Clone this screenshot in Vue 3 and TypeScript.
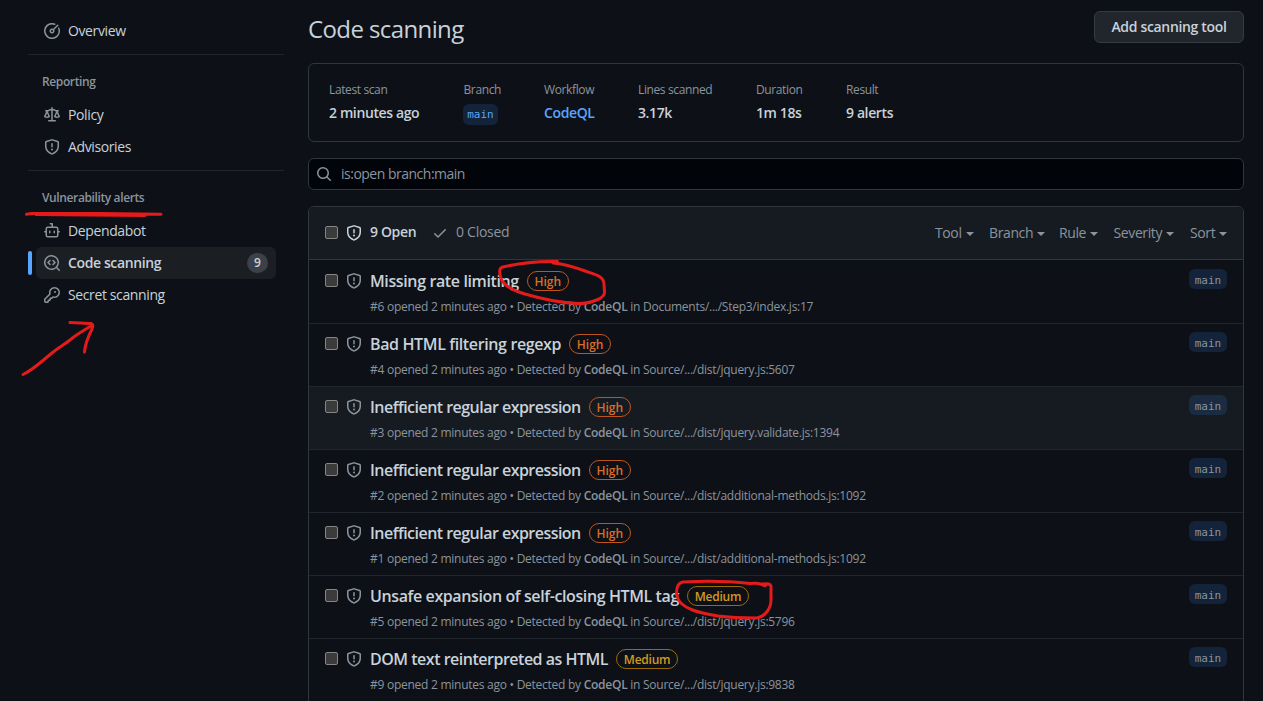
<script setup lang="ts">
interface NavItem {
  label: string
  icon: string
  count?: number
}
interface NavGroup {
  heading?: string
  items: NavItem[]
}
interface Alert {
  id: number
  title: string
  tracking: number
  severity: 'High' | 'Medium'
  location: string
  hovered?: boolean
}

const icons: Record<string, string> = {
  meter:
    'M8 1.5a6.5 6.5 0 1 0 6.016 4.035.75.75 0 0 1 1.388-.57 8 8 0 1 1-4.37-4.37.75.75 0 1 1-.569 1.389A6.479 6.479 0 0 0 8 1.5Zm6.28.22a.75.75 0 0 1 0 1.06l-4.063 4.064a2.5 2.5 0 1 1-1.06-1.06L13.22 1.72a.75.75 0 0 1 1.06 0ZM7 8a1 1 0 1 0 2 0 1 1 0 0 0-2 0Z',
  law: 'M8.75.75V2h.985c.304 0 .603.08.867.231l1.29.736c.038.022.08.033.124.033h2.234a.75.75 0 0 1 0 1.5h-.427l2.111 4.692a.75.75 0 0 1-.154.838l-.53-.53.529.531-.001.002-.002.002-.006.006-.006.005-.01.01-.045.04c-.21.176-.441.327-.686.45C14.556 10.78 13.88 11 13 11a4.498 4.498 0 0 1-2.023-.454 3.544 3.544 0 0 1-.686-.45l-.045-.04-.016-.015-.006-.006-.004-.004v-.001a.75.75 0 0 1-.154-.838L12.178 4.5h-.162c-.305 0-.604-.079-.868-.231l-1.29-.736a.245.245 0 0 0-.124-.033H8.75V13h2.5a.75.75 0 0 1 0 1.5h-6.5a.75.75 0 0 1 0-1.5h2.5V3.5h-.984a.245.245 0 0 0-.124.033l-1.289.737c-.265.15-.564.23-.869.23h-.162l2.112 4.692a.75.75 0 0 1-.154.838l-.53-.53.529.531-.001.002-.002.002-.006.006-.016.015-.045.04c-.21.176-.441.327-.686.45C4.556 10.78 3.88 11 3 11a4.498 4.498 0 0 1-2.023-.454 3.544 3.544 0 0 1-.686-.45l-.045-.04-.016-.015-.006-.006-.004-.004v-.001a.75.75 0 0 1-.154-.838L2.178 4.5H1.75a.75.75 0 0 1 0-1.5h2.234a.249.249 0 0 0 .125-.033l1.288-.737c.265-.15.564-.23.869-.23h.984V.75a.75.75 0 0 1 1.5 0Zm2.945 8.477c.285.135.718.273 1.305.273s1.02-.138 1.305-.273L13 6.327Zm-10 0c.285.135.718.273 1.305.273s1.02-.138 1.305-.273L3 6.327Z',
  shield:
    'M7.467.133a1.748 1.748 0 0 1 1.066 0l5.25 1.68A1.75 1.75 0 0 1 15 3.48V7c0 1.566-.32 3.182-1.303 4.682-.983 1.498-2.585 2.813-5.032 3.855a1.697 1.697 0 0 1-1.33 0c-2.447-1.042-4.049-2.357-5.032-3.855C1.32 10.182 1 8.566 1 7V3.48a1.75 1.75 0 0 1 1.217-1.667Zm.61 1.429a.25.25 0 0 0-.153 0l-5.25 1.68a.25.25 0 0 0-.174.238V7c0 1.358.275 2.666 1.057 3.86.784 1.194 2.121 2.34 4.366 3.297a.196.196 0 0 0 .154 0c2.245-.956 3.582-2.104 4.366-3.298C13.225 9.666 13.5 8.36 13.5 7V3.48a.251.251 0 0 0-.174-.237l-5.25-1.68ZM8.75 4.75v3a.75.75 0 0 1-1.5 0v-3a.75.75 0 0 1 1.5 0ZM9 10.5a1 1 0 1 1-2 0 1 1 0 0 1 2 0Z',
  dependabot:
    'M5.75 7.5a.75.75 0 0 1 .75.75v1.5a.75.75 0 0 1-1.5 0v-1.5a.75.75 0 0 1 .75-.75Zm5.25.75a.75.75 0 0 0-1.5 0v1.5a.75.75 0 0 0 1.5 0v-1.5ZM6.25 0h2A.75.75 0 0 1 9 .75V3.5h3.25a2.25 2.25 0 0 1 2.25 2.25V8h.75a.75.75 0 0 1 0 1.5h-.75v2.75a2.25 2.25 0 0 1-2.25 2.25h-8.5a2.25 2.25 0 0 1-2.25-2.25V9.5H.75a.75.75 0 0 1 0-1.5h.75V5.75A2.25 2.25 0 0 1 3.75 3.5H7.5v-2H6.25a.75.75 0 0 1 0-1.5ZM3 5.75v6.5c0 .414.336.75.75.75h8.5a.75.75 0 0 0 .75-.75v-6.5a.75.75 0 0 0-.75-.75h-8.5a.75.75 0 0 0-.75.75Z',
  codescan:
    'M8.47 4.97a.75.75 0 0 0 0 1.06L9.94 7.5 8.47 8.97a.75.75 0 1 0 1.06 1.06l2-2a.75.75 0 0 0 0-1.06l-2-2a.75.75 0 0 0-1.06 0ZM6.53 6.03a.75.75 0 0 0-1.06-1.06l-2 2a.75.75 0 0 0 0 1.06l2 2a.75.75 0 1 0 1.06-1.06L5.06 7.5l1.47-1.47ZM12.246 13.307a7.5 7.5 0 1 1 1.06-1.06l2.474 2.473a.749.749 0 1 1-1.06 1.06l-2.474-2.473ZM1.5 7.5a6.002 6.002 0 0 0 3.608 5.504 6.002 6.002 0 0 0 6.486-1.117.748.748 0 0 1 .292-.293A6 6 0 1 0 1.5 7.5Z',
  key: 'M10.5 0a5.499 5.499 0 1 1-1.288 10.848l-.932.932a.749.749 0 0 1-.53.22H7v.75a.749.749 0 0 1-.22.53l-.5.5a.749.749 0 0 1-.53.22H5v.75a.749.749 0 0 1-.22.53l-.5.5a.749.749 0 0 1-.53.22h-2A1.75 1.75 0 0 1 0 14.25v-2c0-.199.079-.389.22-.53l4.932-4.932A5.5 5.5 0 0 1 10.5 0Zm-4 5.5c-.001.431.069.86.205 1.269a.75.75 0 0 1-.181.768L1.5 12.56v1.69c0 .138.112.25.25.25h1.69l.06-.06v-1.19a.75.75 0 0 1 .75-.75h1.19l.06-.06v-1.19a.75.75 0 0 1 .75-.75h1.19l1.023-1.025a.75.75 0 0 1 .768-.18A4 4 0 1 0 6.5 5.5ZM11 6a1 1 0 1 1 0-2 1 1 0 0 1 0 2Z',
  check:
    'M13.78 4.22a.75.75 0 0 1 0 1.06l-7.25 7.25a.75.75 0 0 1-1.06 0L2.22 9.28a.751.751 0 0 1 .018-1.042.751.751 0 0 1 1.042-.018L6 10.94l6.72-6.72a.75.75 0 0 1 1.06 0Z',
  search:
    'M10.68 11.74a6 6 0 0 1-7.922-8.982 6 6 0 0 1 8.982 7.922l3.04 3.04a.749.749 0 0 1-.326 1.275.749.749 0 0 1-.734-.215ZM11.5 7a4.499 4.499 0 1 0-8.997 0A4.499 4.499 0 0 0 11.5 7Z',
}

const groups: NavGroup[] = [
  { items: [{ label: 'Overview', icon: 'meter' }] },
  {
    heading: 'Reporting',
    items: [
      { label: 'Policy', icon: 'law' },
      { label: 'Advisories', icon: 'shield' },
    ],
  },
  {
    heading: 'Vulnerability alerts',
    items: [
      { label: 'Dependabot', icon: 'dependabot' },
      { label: 'Code scanning', icon: 'codescan', count: 9 },
      { label: 'Secret scanning', icon: 'key' },
    ],
  },
]

const summary = [
  { label: 'Latest scan', value: '2 minutes ago', kind: 'text' },
  { label: 'Branch', value: 'main', kind: 'branch' },
  { label: 'Workflow', value: 'CodeQL', kind: 'link' },
  { label: 'Lines scanned', value: '3.17k', kind: 'text' },
  { label: 'Duration', value: '1m 18s', kind: 'text' },
  { label: 'Result', value: '9 alerts', kind: 'text' },
]

const filters = ['Tool', 'Branch', 'Rule', 'Severity', 'Sort']

const alerts: Alert[] = [
  { id: 6, title: 'Missing rate limiting', tracking: -0.38, severity: 'High', location: 'Documents/.../Step3/index.js:17' },
  { id: 4, title: 'Bad HTML filtering regexp', tracking: -0.37, severity: 'High', location: 'Source/.../dist/jquery.js:5607' },
  { id: 3, title: 'Inefficient regular expression', tracking: -0.53, severity: 'High', location: 'Source/.../dist/jquery.validate.js:1394', hovered: true },
  { id: 2, title: 'Inefficient regular expression', tracking: -0.53, severity: 'High', location: 'Source/.../dist/additional-methods.js:1092' },
  { id: 1, title: 'Inefficient regular expression', tracking: -0.53, severity: 'High', location: 'Source/.../dist/additional-methods.js:1092' },
  { id: 5, title: 'Unsafe expansion of self-closing HTML tag', tracking: -0.39, severity: 'Medium', location: 'Source/.../dist/jquery.js:5796' },
  { id: 9, title: 'DOM text reinterpreted as HTML', tracking: -0.49, severity: 'Medium', location: 'Source/.../dist/jquery.js:9838' },
]
</script>

<template>
  <div class="page">
    <nav class="sidebar">
      <section v-for="(group, gi) in groups" :key="gi" class="group">
        <h3 v-if="group.heading" class="group-heading">{{ group.heading }}</h3>
        <a v-for="item in group.items" :key="item.label" class="nav-item" :class="{ current: item.count }">
          <svg class="icon" viewBox="0 0 16 16"><path :d="icons[item.icon]" /></svg>
          <span class="nav-label">{{ item.label }}</span>
          <span v-if="item.count" class="counter">{{ item.count }}</span>
        </a>
      </section>
    </nav>

    <main class="content">
      <header class="page-head">
        <h1 class="page-title">Code scanning</h1>
        <button class="tool-button">Add scanning tool</button>
      </header>

      <dl class="summary">
        <div v-for="cell in summary" :key="cell.label" class="summary-cell">
          <dt>{{ cell.label }}</dt>
          <dd :class="cell.kind">
            <span v-if="cell.kind === 'branch'" class="branch-tag link-tag">{{ cell.value }}</span>
            <template v-else>{{ cell.value }}</template>
          </dd>
        </div>
      </dl>

      <div class="search">
        <svg class="icon" viewBox="0 0 16 16"><path :d="icons.search" /></svg>
        <span>is:open branch:main</span>
      </div>

      <section class="list">
        <div class="list-head">
          <span class="checkbox"></span>
          <svg class="icon bright" viewBox="0 0 16 16"><path :d="icons.shield" /></svg>
          <span class="open-count">9 Open</span>
          <svg class="icon check" viewBox="0 0 16 16"><path :d="icons.check" /></svg>
          <span class="closed-count">0 Closed</span>
          <div class="filters">
            <span v-for="name in filters" :key="name" class="filter">{{ name }}<i class="caret"></i></span>
          </div>
        </div>

        <article v-for="alert in alerts" :key="alert.id" class="row" :class="{ hovered: alert.hovered }">
          <span class="checkbox"></span>
          <svg class="icon" viewBox="0 0 16 16"><path :d="icons.shield" /></svg>
          <div class="row-body">
            <div class="row-title">
              <span class="title-text" :style="{ letterSpacing: `${alert.tracking}px` }">{{ alert.title }}</span>
              <span class="severity" :class="alert.severity.toLowerCase()">{{ alert.severity }}</span>
            </div>
            <div class="row-meta">
              #{{ alert.id }} opened 2 minutes ago • Detected by <b>CodeQL</b> in {{ alert.location }}
            </div>
          </div>
          <span class="branch-tag">main</span>
        </article>
      </section>
    </main>

    <!-- Hand-drawn markup over the page -->
    <svg class="markup" viewBox="0 0 1263 701">
      <path d="M26.500 214.300 L32 213.500 L100 213.500 L161 214.300 M36 214.500 L90 215 L145 215.500" />
      <path d="M23 374.500 C33 370 42 361 52 353 C59 347 64 345 70 340 C77 334 84 330 92 325.500" />
      <path d="M70 322.500 C78 323 85 323 91 323.500 Q94 324.500 92 329 C88 337 85 344 84.500 352" />
      <path d="M557.500 261.500 C541 261 520 263 503 267 C499 268 499.500 271 500 275 C501 284 511 290 525 294 C542 299 560 303 578 303.500 C592 303.500 605 298 604.500 292 L604 284 C604 277 597 275 588 272 C577 268 564 263.500 553 263" />
      <path d="M765 586 C760 583 757 583 750 583.500 C728 581 702 581 683 582 C677 583 676 590 677 596 C680 609 700 613 718 616 C733 618 745 618 757 618 C766 616 771 608 771 600 L771 586 C770 583 766 584 761 584" />
    </svg>
  </div>
</template>

<style>
html,
body {
  margin: 0;
  background: #0d1117;
}
</style>

<style scoped>
.page {
  position: relative;
  display: flex;
  width: 1263px;
  height: 701px;
  overflow: hidden;
  box-sizing: border-box;
  background: #0d1117;
  color: #c9d1d9;
  font-family: 'Open Sans', 'Noto Sans', sans-serif;
  font-size: 14px;
  line-height: 20px;
  font-stretch: 94%;
  letter-spacing: -0.38px;
  white-space: nowrap;
}
.page *,
.page *::before {
  box-sizing: border-box;
}
h1,
h3,
dl,
dd {
  margin: 0;
}
.icon {
  flex: none;
  width: 16px;
  height: 16px;
  fill: #8b949e;
}
.icon.bright {
  fill: #c9d1d9;
}

.sidebar {
  flex: none;
  width: 256px;
  margin: 15px 24px 0 28px;
}
.group + .group {
  margin-top: 7px;
  border-top: 1px solid #21262d;
  padding-top: 16px;
}
.group-heading {
  height: 28px;
  padding: 1px 14px 0;
  font-size: 12px;
  font-weight: 600;
  line-height: 20px;
  color: #8b949e;
}
.nav-item {
  position: relative;
  display: flex;
  align-items: center;
  gap: 8px;
  height: 32px;
  margin: 0 8px;
  padding: 0 8px;
  border-radius: 6px;
}
.nav-item.current {
  background: #1b1f23;
  font-weight: 600;
}
.nav-item.current::before {
  content: '';
  position: absolute;
  left: -8px;
  top: 4px;
  width: 4px;
  height: 24px;
  border-radius: 6px;
  background: #58a6ff;
}
.nav-label {
  flex: 1;
}
.counter {
  width: 21px;
  height: 20px;
  border-radius: 10px;
  background: rgba(110, 118, 129, 0.4);
  font-size: 12px;
  line-height: 20px;
  letter-spacing: 0;
  text-align: center;
}

.content {
  flex: none;
  width: 936px;
}
.page-head {
  display: flex;
  align-items: flex-start;
  justify-content: space-between;
  height: 63px;
  padding-top: 11px;
}
.page-title {
  font-size: 24px;
  font-weight: 400;
  line-height: 36px;
  letter-spacing: -0.6px;
}
.tool-button {
  width: 150px;
  height: 32px;
  padding: 0;
  border: 1px solid #363b42;
  border-radius: 6px;
  background: #21262d;
  color: #c9d1d9;
  font: inherit;
  font-weight: 600;
  letter-spacing: -0.33px;
}
.summary {
  display: grid;
  grid-template-columns: 134.500px 80.500px 94px 118px 90px 1fr;
  height: 79px;
  padding: 15px 20px;
  border: 1px solid #30363d;
  border-radius: 6px;
}
.summary-cell dt {
  height: 24px;
  font-size: 12px;
  line-height: 22px;
  color: #8b949e;
}
.summary-cell dd {
  font-weight: 600;
  line-height: 20px;
}
.summary-cell .link {
  color: #58a6ff;
}
.branch-tag {
  display: block;
  width: 38px;
  height: 20px;
  border-radius: 6px;
  background: rgba(56, 139, 253, 0.15);
  color: #8b949e;
  font-family: 'DejaVu Sans Mono', monospace;
  font-size: 11px;
  font-weight: 400;
  line-height: 23px;
  letter-spacing: 0;
  text-align: center;
}
.link-tag {
  width: 35px;
  height: 21px;
  margin-top: 1px;
  margin-left: -0.500px;
  line-height: 22px;
  color: #58a6ff;
}
.search {
  display: flex;
  align-items: center;
  gap: 9px;
  height: 32px;
  margin-top: 16px;
  padding: 0 7px;
  border: 1px solid #30363d;
  border-radius: 6px;
  background: #010409;
  color: #8b949e;
  letter-spacing: -0.5px;
}

.list {
  height: 520px;
  margin-top: 16px;
  border: 1px solid #30363d;
  border-radius: 6px 6px 0 0;
}
.list-head {
  display: flex;
  align-items: center;
  height: 53px;
  padding: 0 16px 1px;
  border-bottom: 1px solid #30363d;
  border-radius: 5px 5px 0 0;
  background: #161b22;
}
.checkbox {
  flex: none;
  width: 13px;
  height: 13px;
  margin-right: 8px;
  border: 1px solid #858585;
  border-radius: 2px;
  background: #3b3b3b;
}
.list-head .icon {
  margin-top: 1px;
}
.open-count {
  width: 62px;
  margin-left: 8px;
  margin-top: -1px;
  letter-spacing: -0.35px;
  font-weight: 600;
}
.list-head .check {
  margin-right: 8px;
}
.closed-count {
  margin-top: -1px;
  color: #8b949e;
  letter-spacing: -0.27px;
}
.filters {
  display: grid;
  grid-template-columns: 54px 70px 54.500px 76.500px 37px;
  margin-left: auto;
  padding-top: 1px;
  color: #8b949e;
}
.filter {
  display: flex;
  align-items: center;
}
.caret {
  margin: 1px 0 0 4px;
  border: 4px solid transparent;
  border-top-color: currentColor;
  border-bottom: 0;
}
.row {
  display: flex;
  align-items: flex-start;
  height: 63px;
  padding: 8px 16px 0;
  border-top: 1px solid #21262d;
}
.list-head + .row {
  border-top-color: transparent;
}
.row.hovered {
  background: #161b22;
}
.row .checkbox {
  margin-top: 5px;
}
.row > .icon {
  margin-top: 4px;
}
.row .branch-tag {
  flex: none;
}
.row-body {
  flex: 1;
  padding-left: 8px;
}
.row-title {
  display: flex;
  align-items: center;
  gap: 8px;
  height: 24px;
}
.title-text {
  font-size: 16px;
  font-weight: 600;
  line-height: 24px;
}
.severity {
  height: 20px;
  border: 1px solid;
  border-radius: 10px;
  font-size: 12px;
  font-weight: 600;
  line-height: 19px;
  text-align: center;
}
.severity.high {
  width: 42px;
  border-color: #bd561d;
  color: #db6d28;
  letter-spacing: 0;
}
.severity.medium {
  width: 62px;
  border-color: #9e6a03;
  color: #d29922;
  letter-spacing: -0.25px;
}
.row-meta {
  margin-top: 5px;
  font-size: 12px;
  line-height: 18px;
  letter-spacing: -0.26px;
  color: #8b949e;
}
.row-meta b {
  font-weight: 600;
}

.markup {
  position: absolute;
  inset: 0;
  width: 1263px;
  height: 701px;
  fill: none;
  stroke: #e51a1a;
  stroke-width: 3;
  stroke-linecap: round;
  stroke-linejoin: round;
  pointer-events: none;
}
</style>
